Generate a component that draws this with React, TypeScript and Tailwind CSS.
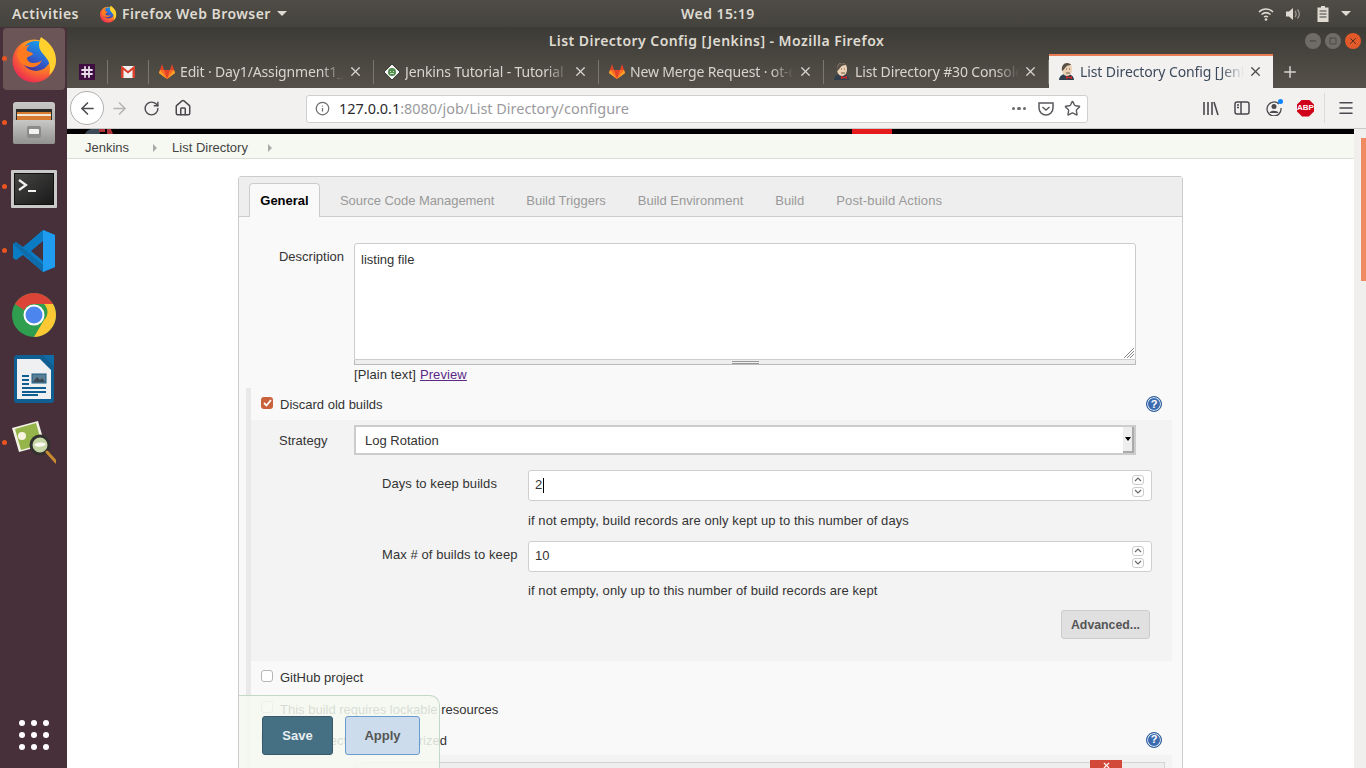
import { ArrowLeft, ArrowRight, Home, Info, Menu, Minus, Plus, RotateCw, Square, Star, X } from "lucide-react";

function FirefoxLogo({ size, id }: { size: number; id: string }) {
  return (
    <svg width={size} height={size} viewBox="0 0 48 48">
      <defs>
        <radialGradient id={`${id}a`} cx="0.7" cy="0.2" r="1">
          <stop offset="0" stopColor="#ffd23f" />
          <stop offset="0.45" stopColor="#ff8a1f" />
          <stop offset="0.8" stopColor="#f0384a" />
          <stop offset="1" stopColor="#d4187a" />
        </radialGradient>
        <linearGradient id={`${id}b`} x1="0.8" y1="0" x2="0.3" y2="1">
          <stop offset="0" stopColor="#12a6ee" />
          <stop offset="0.6" stopColor="#2f5fcf" />
          <stop offset="1" stopColor="#49308f" />
        </linearGradient>
      </defs>
      <circle cx="24" cy="26" r="21.5" fill={`url(#${id}a)`} />
      <circle cx="26" cy="21" r="15" fill={`url(#${id}b)`} />
      <path d="M7 19c2-5 7-9 13-9-3 2-4 4-3 6 2 1 5 1 6 3-1 2-5 2-6 4 0 3 3 5 7 5 3 0 6-1 8-3-2 5-7 8-12 7-7-1-12-6-13-13z" fill="#ff7a1f" />
      <path d="M31 2c6 4 15 11 15 23 0 7-3 12-7 15 2-6 1-12-2-16-3-5-8-8-8-14 0-3 1-6 2-8z" fill="#ffd02e" />
    </svg>
  );
}

function FilesIcon() {
  return (
    <svg width="42" height="42" viewBox="0 0 42 42">
      <defs>
        <linearGradient id="cabinet" x1="0" y1="0" x2="0" y2="1">
          <stop offset="0" stopColor="#c8c8c7" />
          <stop offset="1" stopColor="#929291" />
        </linearGradient>
      </defs>
      <rect x="0" y="0" width="42" height="42" rx="3" fill="url(#cabinet)" />
      <rect x="3" y="7" width="36" height="11" fill="#2d2b2a" />
      <rect x="4" y="10" width="34" height="8" fill="#d67a32" />
      <rect x="4" y="12" width="34" height="2" fill="#f2e6d5" />
      <rect x="0" y="18" width="42" height="24" rx="2" fill="url(#cabinet)" />
      <rect x="14" y="24" width="14" height="12" rx="2" fill="#8b8b8a" />
      <rect x="16" y="27" width="10" height="5" rx="1" fill="#f2f2f2" />
    </svg>
  );
}

function TerminalIcon() {
  return (
    <svg width="46" height="38" viewBox="0 0 46 38">
      <defs>
        <linearGradient id="termbg" x1="0" y1="0" x2="1" y2="1">
          <stop offset="0" stopColor="#454544" />
          <stop offset="1" stopColor="#1a1a1a" />
        </linearGradient>
      </defs>
      <rect width="46" height="38" rx="1" fill="#c9c9c7" />
      <rect x="3" y="3" width="40" height="32" fill="#111" />
      <rect x="4" y="4" width="38" height="30" fill="url(#termbg)" />
      <path d="M8 10l7 5-7 5" fill="none" stroke="#f2f2f2" strokeWidth="2.200" />
      <rect x="17" y="20" width="8" height="2" fill="#f2f2f2" />
    </svg>
  );
}

function VscodeIcon() {
  return (
    <svg width="42" height="42" viewBox="0 0 42 42">
      <path d="M30 0l12 5v32l-12 5-20-17-7 5-3-2V14l3-2 7 5z" fill="#0b7bc4" />
      <path d="M30 0l12 5v32l-12 5z" fill="#1f9cf0" />
      <path d="M30 11L18 21l12 10z" fill="#47303a" />
      <path d="M0 14l3-2 27 23v7z" fill="#0e6cab" />
    </svg>
  );
}

function ChromeIcon({ size }: { size: number }) {
  return (
    <svg width={size} height={size} viewBox="0 0 44 44">
      <circle cx="22" cy="22" r="22" fill="#2f9e4f" />
      <path d="M3 11a22 22 0 0 1 38 0H22a11 11 0 0 0-10 6z" fill="#db4437" />
      <path d="M41 11a22 22 0 0 1-19 33l10-17a11 11 0 0 0 0-16z" fill="#fcc934" />
      <circle cx="22" cy="22" r="10.500" fill="#fff" />
      <circle cx="22" cy="22" r="8.500" fill="#4c85ee" />
    </svg>
  );
}

function WriterIcon() {
  return (
    <svg width="40" height="48" viewBox="0 0 40 48">
      <path d="M2 0h26l12 12v33a3 3 0 0 1-3 3H3a3 3 0 0 1-3-3V2z" fill="#0f5f93" />
      <path d="M28 0h12v12z" fill="#0f6ba5" />
      <path d="M3 4h23l11 11v29H3z" fill="#eef0f1" />
      <rect x="18" y="19" width="14" height="9" fill="#5b7f95" stroke="#1b5c86" />
      <path d="M19 27l4-5 3 3 2-2 3 4z" fill="#3b4a52" />
      <path d="M8 21h7M8 25h7M8 29h7M8 33h24M8 37h24M8 40h16" stroke="#0f5f93" strokeWidth="2" />
    </svg>
  );
}

function ViewerIcon() {
  return (
    <svg width="44" height="44" viewBox="0 0 44 44">
      <path d="M0 7L26 0l7 24-26 7z" fill="#f3f2e6" />
      <path d="M3 8l21-6 6 21-21 6z" fill="#95b54a" />
      <circle cx="10" cy="15" r="4" fill="#f7f4e2" />
      <circle cx="28" cy="24" r="9" fill="#c7d6a5" stroke="#333130" strokeWidth="3" />
      <path d="M22 24c3-3 8-3 12-1-2 3-9 4-12 1z" fill="#fafaf2" />
      <path d="M35 31l9 10" stroke="#c78a30" strokeWidth="3" strokeLinecap="round" />
    </svg>
  );
}

function GitlabIcon() {
  return (
    <svg width="16" height="15" viewBox="0 0 16 15">
      <path d="M8 15L0 9l1-3h14l1 3z" fill="#fc6d26" />
      <path d="M8 15L5 6h6z" fill="#e24329" />
      <path d="M1 6l2-6 2 6zM15 6l-2-6-2 6z" fill="#e24329" />
      <path d="M1 6L0 9l8 6zM15 6l1 3-8 6z" fill="#fca326" />
    </svg>
  );
}

function JenkinsFavicon() {
  return (
    <svg width="16" height="17" viewBox="0 0 16 17">
      <path d="M0 17c0-3 2-5 5-6h5c3 1 5 3 5 6z" fill="#2f3d4c" />
      <path d="M3 6c0-4 2-6 5-6s5 2 5 6-2 7-5 7-5-3-5-7z" fill="#ecd0b4" />
      <path d="M3 8C2 3 5 0 8 0c2 0 4 1 4 2-3 0-5 1-6 3-1 1-1 2-3 3z" fill="#5a5148" />
      <path d="M7 6h1M10 6h1M7 10h4" stroke="#6b5a4a" strokeWidth="1" />
      <path d="M7 13l3 1 3-1v3l-3-1-3 1z" fill="#cc2b2b" />
    </svg>
  );
}

function JenkinsTutorialFavicon() {
  return (
    <svg width="16" height="16" viewBox="0 0 16 16">
      <path d="M8 0l8 8-8 8-8-8z" fill="#f4f4f4" stroke="#222" strokeWidth="0.800" />
      <circle cx="8" cy="8" r="4" fill="#4f8a4a" />
      <path d="M6 7.500h1M9 7.500h1M6 9.500h4" stroke="#eee" strokeWidth="0.800" />
    </svg>
  );
}

function SlackIcon() {
  return (
    <svg width="16" height="16" viewBox="0 0 16 16">
      <rect width="16" height="16" fill="#3f0e40" />
      <path d="M6 3v10M10 3v10M3 6h10M3 10h10" stroke="#e8dce8" strokeWidth="1.800" strokeLinecap="round" />
    </svg>
  );
}

function GmailIcon() {
  return (
    <svg width="14" height="12" viewBox="0 0 14 12">
      <rect width="14" height="12" fill="#f1f1f1" />
      <path d="M0 0v12h2.500V4L7 7.500 11.500 4v8H14V0h-1L7 5 1 0z" fill="#d9412f" />
    </svg>
  );
}

type TabInfo = { title: string; icon: React.ReactNode };

const tabs: TabInfo[] = [
  { title: "Edit · Day1/Assignment1_", icon: <GitlabIcon /> },
  { title: "Jenkins Tutorial - Tutorial", icon: <JenkinsTutorialFavicon /> },
  { title: "New Merge Request · ot-dev", icon: <GitlabIcon /> },
  { title: "List Directory #30 Console", icon: <JenkinsFavicon /> },
];

function BrowserTab({ tab }: { tab: TabInfo }) {
  return (
    <div className="flex h-full w-[224px] shrink-0 items-center pl-[10px]">
      <div className="flex w-[16px] shrink-0 justify-center">{tab.icon}</div>
      <span className="ml-[5px] w-[164px] overflow-hidden whitespace-nowrap text-[14px] tracking-[-0.15px] text-[#d8d5cf] [mask-image:linear-gradient(to_right,black_86%,transparent)]">
        {tab.title}
      </span>
      <X size={15} className="ml-[4px] shrink-0 text-[#d8d5cf]" />
    </div>
  );
}

function TabSeparator() {
  return <div className="h-[24px] w-px shrink-0 bg-[#7b7770]" />;
}

function DockSlot({ children, running }: { children: React.ReactNode; running?: boolean }) {
  return (
    <div className="relative flex h-[64px] w-full shrink-0 items-center justify-center">
      {running && <span className="absolute left-[2px] top-[29px] size-[5px] rounded-full bg-[#e95420]" />}
      {children}
    </div>
  );
}

function Dock() {
  return (
    <div className="flex h-full w-[67px] shrink-0 flex-col items-center bg-[#47303a]">
      <DockSlot running>
        <div className="flex size-[62px] items-center justify-center rounded-[4px] bg-[#6b5556]">
          <FirefoxLogo size={48} id="dockfox" />
        </div>
      </DockSlot>
      <DockSlot running><FilesIcon /></DockSlot>
      <DockSlot running><div className="mt-[3px]"><TerminalIcon /></div></DockSlot>
      <DockSlot running><VscodeIcon /></DockSlot>
      <DockSlot><ChromeIcon size={44} /></DockSlot>
      <DockSlot><WriterIcon /></DockSlot>
      <DockSlot running><ViewerIcon /></DockSlot>
      <div className="mb-[18px] mt-auto grid grid-cols-3 gap-[6px]">
        {Array.from({ length: 9 }).map((_, i) => (
          <span key={i} className="size-[6px] rounded-full bg-white" />
        ))}
      </div>
    </div>
  );
}

function TopPanel() {
  return (
    <div className="grid h-[27px] shrink-0 grid-cols-[681px_auto_1fr] items-center bg-gradient-to-b from-[#4f4c46] to-[#45433d] text-[14px] font-semibold tracking-[0.45px] text-[#dfdbd2]">
      <div className="flex items-center pl-[12px]">
        <span>Activities</span>
        <div className="ml-[20px]"><FirefoxLogo size={18} id="panelfox" /></div>
        <span className="ml-[5px]">Firefox Web Browser</span>
        <span className="ml-[6px] h-0 w-0 border-x-[5px] border-t-[5px] border-x-transparent border-t-[#dfdbd2]" />
      </div>
      <span>Wed 15:19</span>
      <div className="flex items-center justify-end pr-[15px]">
        <svg width="16" height="14" viewBox="0 0 16 14" fill="none" stroke="#dfdbd2" strokeWidth="1.500">
          <path d="M1 5c4-4 10-4 14 0M3.500 7.500c3-2.500 6-2.500 9 0M6 10c1.500-1 2.500-1 4 0" />
          <circle cx="8" cy="12.500" r="1.300" fill="#dfdbd2" stroke="none" />
        </svg>
        <svg className="ml-[12px]" width="16" height="14" viewBox="0 0 16 14">
          <path d="M0 4.500h3L7 1v12L3 9.500H0z" fill="#dfdbd2" />
          <path d="M9 4c1.500 2 1.500 4 0 6M11.500 2.500c2.500 3 2.500 6 0 9" stroke="#9a978f" strokeWidth="1.300" fill="none" />
        </svg>
        <svg className="ml-[15px]" width="12" height="16" viewBox="0 0 12 16">
          <path d="M4 0h4v1.500h3.500V16H.5V1.500H4z" fill="#dfdbd2" />
          <path d="M2.500 5h7M2.500 8h7M2.500 11h7" stroke="#45433d" strokeWidth="1.200" />
        </svg>
        <span className="ml-[12px] h-0 w-0 border-x-[5px] border-t-[5px] border-x-transparent border-t-[#dfdbd2]" />
      </div>
    </div>
  );
}

function WindowButtons() {
  return (
    <div className="flex items-center justify-end gap-[4px] pr-[5px]">
      <span className="flex size-[16px] items-center justify-center rounded-full bg-[#6f6c66]">
        <Minus size={10} strokeWidth={2} className="text-[#3a3935]" />
      </span>
      <span className="flex size-[16px] items-center justify-center rounded-full bg-[#6f6c66]">
        <Square size={8} strokeWidth={2} className="text-[#3a3935]" />
      </span>
      <span className="flex size-[16px] items-center justify-center rounded-full bg-[#e2592a]">
        <X size={10} strokeWidth={2} className="text-[#3a2a22]" />
      </span>
    </div>
  );
}

function TabStrip() {
  return (
    <div className="flex h-[34px] shrink-0 items-end pl-[8px]">
      <div className="flex h-[33px] w-[32px] shrink-0 items-center pl-[4px]"><SlackIcon /></div>
      <div className="flex h-[33px] items-center"><TabSeparator /></div>
      <div className="flex h-[33px] w-[40px] shrink-0 items-center pl-[13px]"><GmailIcon /></div>
      <div className="flex h-[33px] items-center"><TabSeparator /></div>
      {tabs.map((tab) => (
        <div key={tab.title} className="flex h-[33px] items-center">
          <BrowserTab tab={tab} />
          <TabSeparator />
        </div>
      ))}
      <div className="flex h-[34px] w-[224px] shrink-0 items-center border-t-[2px] border-[#e97d56] bg-[#f2f1f0] pb-[2px] pl-[10px]">
        <JenkinsFavicon />
        <span className="ml-[5px] w-[164px] overflow-hidden whitespace-nowrap text-[14px] tracking-[-0.1px] text-[#3d4a5c] [mask-image:linear-gradient(to_right,black_86%,transparent)]">
          List Directory Config [Jenkins]
        </span>
        <X size={15} className="ml-[4px] text-[#4a4a48]" />
      </div>
      <div className="flex h-[33px] items-center pl-[8px]">
        <Plus size={18} className="text-[#d8d5cf]" />
      </div>
    </div>
  );
}

function Toolbar() {
  return (
    <div className="flex h-[41px] shrink-0 items-center border-b border-[#c9c9c8] bg-[#f2f1f0] pl-[3px] text-[#4a4a4f]">
      <span className="flex size-[34px] items-center justify-center rounded-full border border-[#b1b1b0] bg-white">
        <ArrowLeft size={19} />
      </span>
      <ArrowRight size={19} className="ml-[6px] text-[#b5b5b4]" />
      <RotateCw size={17} className="ml-[14px]" />
      <Home size={18} className="ml-[14px]" />
      <div className="ml-[114px] mt-px flex h-[28px] w-[782px] items-center rounded-[3px] border border-[#cfcfce] bg-white pl-[8px] pr-[6px]">
        <Info size={15} className="text-[#6a6a6f]" />
        <span className="ml-[9px] whitespace-nowrap text-[14.450px] text-[#9a9a9e]">
          <span className="text-[#2a2a2e]">127.0.0.1</span>:8080/job/List Directory/configure
        </span>
        <div className="ml-auto flex items-center">
          <span className="flex gap-[2px]">
            <span className="size-[3.500px] rounded-full bg-[#6a6a6f]" />
            <span className="size-[3.500px] rounded-full bg-[#6a6a6f]" />
            <span className="size-[3.500px] rounded-full bg-[#6a6a6f]" />
          </span>
          <svg className="ml-[12px]" width="16" height="14" viewBox="0 0 16 14" fill="none" stroke="#5a5a5f" strokeWidth="1.500">
            <path d="M1 1h14v5a7 7 0 0 1-14 0z" />
            <path d="M4.500 5L8 8l3.500-3" />
          </svg>
          <Star size={17} className="ml-[10px] text-[#5a5a5f]" />
        </div>
      </div>
      <svg className="ml-[115px]" width="16" height="15" viewBox="0 0 16 15" fill="none" stroke="#4a4a4f" strokeWidth="1.600">
        <path d="M1 1v13M5 1v13M9 1v13M11 1l4 13" />
      </svg>
      <svg className="ml-[15px]" width="16" height="14" viewBox="0 0 16 14" fill="none" stroke="#4a4a4f" strokeWidth="1.500">
        <rect x="1" y="1" width="14" height="12" rx="2" />
        <path d="M7 1v12M3 4h2M3 6.500h2" />
      </svg>
      <div className="relative ml-[16px] size-[16px]">
        <svg width="16" height="16" viewBox="0 0 16 16" fill="none" stroke="#4a4a4f" strokeWidth="1.300">
          <path d="M13 4a7 7 0 1 0 2 4" />
          <circle cx="8" cy="6.500" r="2.500" fill="#4a4a4f" stroke="none" />
          <path d="M3.500 13c1-3 8-3 9 0" fill="#4a4a4f" stroke="none" />
        </svg>
        <span className="absolute -right-[1px] -top-[1px] size-[5px] rounded-full bg-[#0a84ff]" />
      </div>
      <span className="ml-[15px] flex size-[17px] items-center justify-center bg-[#d0021b] font-['Liberation_Sans',sans-serif] text-[8px] font-bold leading-none text-white [clip-path:polygon(30%_0,70%_0,100%_30%,100%_70%,70%_100%,30%_100%,0_70%,0_30%)]">
        ABP
      </span>
      <div className="ml-[10px] h-[30px] w-px bg-[#dcdcdb]" />
      <Menu size={18} className="ml-[12px]" />
    </div>
  );
}

function HelpIcon() {
  return (
    <span className="flex size-[16px] items-center justify-center rounded-full border border-[#2f5f9e] bg-[#3d6bb0] text-[11px] font-bold leading-none text-white shadow-[inset_0_0_0_1px_#dbe6f3]">
      ?
    </span>
  );
}

function CheckBox({ checked }: { checked?: boolean }) {
  if (checked) {
    return (
      <span className="flex size-[12px] shrink-0 items-center justify-center rounded-[3px] bg-[#c9623c]">
        <svg width="9" height="8" viewBox="0 0 9 8" fill="none" stroke="#fff" strokeWidth="1.800">
          <path d="M1 4l2.500 2.500L8 1" />
        </svg>
      </span>
    );
  }
  return <span className="block size-[12px] shrink-0 rounded-[3px] border border-[#b5b5b5] bg-white" />;
}

function OptionRow({ label, checked, help, height }: { label: string; checked?: boolean; help?: boolean; height: string }) {
  return (
    <div className={`flex items-center pl-[10px] pr-[10px] ${height}`}>
      <span className="-mt-[3px]"><CheckBox checked={checked} /></span>
      <span className="ml-[7px] mt-[2px] text-[13px] text-[#333]">{label}</span>
      {help && <span className="ml-auto"><HelpIcon /></span>}
    </div>
  );
}

function Spinner() {
  return (
    <div className="flex flex-col gap-[2px]">
      <span className="flex h-[10px] w-[12px] items-center justify-center rounded-[3px] border border-[#ccc] bg-white">
        <svg width="8" height="5" viewBox="0 0 8 5" fill="none" stroke="#666" strokeWidth="1.200"><path d="M1 4l3-3 3 3" /></svg>
      </span>
      <span className="flex h-[10px] w-[12px] items-center justify-center rounded-[3px] border border-[#ccc] bg-white">
        <svg width="8" height="5" viewBox="0 0 8 5" fill="none" stroke="#666" strokeWidth="1.200"><path d="M1 1l3 3 3-3" /></svg>
      </span>
    </div>
  );
}

function NumberField({ label, value, caret }: { label: string; value: string; caret?: boolean }) {
  return (
    <div className="flex items-start pl-[131px]">
      <span className="w-[146px] pt-[4px] text-[13px] tracking-[0.08px] text-[#333]">{label}</span>
      <div className="flex h-[31px] w-[624px] items-center rounded-[3px] border border-[#cfcfcf] bg-white pl-[6px] pr-[7px] text-[13px] text-[#333]">
        <span className="-mt-[2px]">{value}</span>
        {caret && <span className="ml-px h-[15px] w-px bg-black" />}
        <span className="ml-auto"><Spinner /></span>
      </div>
    </div>
  );
}

function HintRow({ children, height }: { children: React.ReactNode; height: string }) {
  return <div className={`flex items-center pl-[277px] text-[13px] tracking-[0.08px] text-[#333] ${height}`}>{children}</div>;
}

function ConfigTabs() {
  return (
    <div className="flex h-[40px] items-end border-b border-[#ccc] bg-[#eee] pl-[10px] text-[13px] text-[#999]">
      <div className="relative -mb-px flex h-[34px] w-[71px] items-center justify-center rounded-t-[4px] border border-b-0 border-[#ccc] bg-[#f9f9f9] font-bold text-black">
        General
      </div>
      <div className="ml-[20px] flex h-[33px] items-center gap-[32px] whitespace-nowrap pt-[3px]">
        <span className="tracking-[-0.05px]">Source Code Management</span>
        <span>Build Triggers</span>
        <span>Build Environment</span>
        <span>Build</span>
        <span className="tracking-[0.15px]">Post-build Actions</span>
      </div>
    </div>
  );
}

function DescriptionField() {
  return (
    <>
      <div className="mt-[26px] flex items-start">
        <span className="w-[105px] pt-[4px] text-right text-[13px] text-[#333]">Description</span>
        <div className="relative ml-[10px] h-[117px] w-[782px] rounded-t-[3px] border border-[#ccc] bg-white px-[6px] py-[6px] text-[13px] text-[#333]">
          listing file
          <svg className="absolute bottom-px right-px" width="11" height="11" viewBox="0 0 11 11" stroke="#888" strokeWidth="1">
            <path d="M1 11L11 1M4 11l7-7M7 11l4-4" />
          </svg>
        </div>
      </div>
      <div className="ml-[115px] flex h-[5px] w-[782px] items-center justify-center border border-t-0 border-[#bbb] bg-[#eee]">
        <span className="h-[3px] w-[27px] border-y border-[#999]" />
      </div>
      <div className="ml-[115px] mt-px flex h-[17px] items-center text-[13px] tracking-[0.1px] text-[#333]">
        [Plain text]<span className="ml-[4px] text-[#5b2a86] underline">Preview</span>
      </div>
    </>
  );
}

function DiscardPanel() {
  return (
    <div className="flex h-[241px] flex-col bg-[#f3f3f3] pt-[5px]">
      <div className="flex items-start pl-[28px]">
        <span className="w-[75px] pt-[6px] text-[13px] text-[#333]">Strategy</span>
        <div className="flex h-[30px] w-[782px] items-stretch border-2 border-[#ccc] bg-white text-[13px] text-[#333]">
          <span className="flex flex-1 items-center pl-[9px] pt-[1px]">Log Rotation</span>
          <span className="flex w-[11px] items-center justify-center border-b-2 border-r-2 border-[#aaa] bg-[#eee]">
            <span className="h-0 w-0 border-x-[3px] border-t-[4px] border-x-transparent border-t-black" />
          </span>
        </div>
      </div>
      <div className="mt-[15px]"><NumberField label="Days to keep builds" value="2" caret /></div>
      <HintRow height="h-[40px]">if not empty, build records are only kept up to this number of days</HintRow>
      <NumberField label="Max # of builds to keep" value="10" />
      <HintRow height="h-[38px]">if not empty, only up to this number of build records are kept</HintRow>
      <div className="flex justify-end pr-[22px]">
        <span className="flex h-[29px] w-[89px] items-center justify-center rounded-[3px] border border-[#ccc] bg-[#e0e0e0] pt-[2px] text-[12.300px] font-bold text-[#555]">
          Advanced...
        </span>
      </div>
    </div>
  );
}

function ParameterPanel() {
  return (
    <div className="h-[300px] bg-[#f3f3f3] pl-[103px] pt-[7px]">
      <div className="flex h-full">
        <div className="w-[5px] bg-[#e6e6e6]" />
        <div className="relative ml-[2px] w-[804px] border border-[#d4d4d4] bg-[#eee]">
          <span className="absolute -top-[3px] right-[42px] flex h-[40px] w-[32px] justify-center bg-[#d24939] pt-[1px]">
            <X size={9} strokeWidth={3} className="text-white" />
          </span>
        </div>
      </div>
    </div>
  );
}

function SaveBar() {
  return (
    <div className="absolute bottom-0 left-[172px] flex h-[73px] w-[201px] items-start rounded-tr-[10px] border-r border-t border-[#c3d8c6] bg-[#f5f9f0]/85 pl-[23px] pt-[20px] text-[13px] font-bold">
      <span className="flex h-[39px] w-[71px] items-center justify-center rounded-[3px] border border-[#375a6b] bg-[#457084] text-[#e8eef0]">
        Save
      </span>
      <span className="ml-[12px] flex h-[39px] w-[75px] items-center justify-center rounded-[3px] border border-[#6a9bd0] bg-[#cddcec] text-[#555]">
        Apply
      </span>
    </div>
  );
}

function JenkinsPage() {
  return (
    <div className="relative min-w-0 flex-1 overflow-hidden bg-white font-['Liberation_Sans',Arial,sans-serif]">
      <div className="flex h-[5px] items-start bg-black pl-[18px]">
        <svg width="33" height="5" viewBox="0 0 33 5">
          <path d="M0 5c1-3 4-5 8-5h6l1 5z" fill="#3c4a57" />
          <path d="M14 0h6v3h-6zM22 0h4l2 5h-6z" fill="#b0343a" />
        </svg>
        <span className="ml-[734px] h-full w-[40px] bg-[#e51a1a]" />
      </div>
      <div className="flex h-[25px] items-center border-b border-[#dcdfd8] bg-[#f6f8f2] pl-[18px] pt-[4px] text-[13px] text-[#444]">
        <span>Jenkins</span>
        <span className="ml-[24px] h-0 w-0 border-y-[4px] border-l-[4px] border-y-transparent border-l-[#aaa]" />
        <span className="ml-[15px]">List Directory</span>
        <span className="ml-[20px] h-0 w-0 border-y-[4px] border-l-[4px] border-y-transparent border-l-[#aaa]" />
      </div>
      <div className="ml-[171px] mt-[17px] w-[945px] rounded-t-[3px] border border-[#ccc] bg-[#f9f9f9]">
        <ConfigTabs />
        <DescriptionField />
        <div className="ml-[7px] mt-[5px] w-[926px] border-l-[5px] border-[#e9e9e9]">
          <OptionRow label="Discard old builds" checked help height="h-[32px]" />
          <DiscardPanel />
          <OptionRow label="GitHub project" height="h-[32px]" />
          <OptionRow label="This build requires lockable resources" height="h-[31px]" />
          <OptionRow label="This project is parameterized" help height="h-[31px]" />
          <ParameterPanel />
        </div>
      </div>
      <SaveBar />
    </div>
  );
}

function Scrollbar() {
  return (
    <div className="flex w-[12px] shrink-0 justify-end bg-[#f0efed] pt-[9px]">
      <div className="h-[143px] w-[5px] bg-[#f08a63]" />
    </div>
  );
}

export default function App() {
  return (
    <div className="flex h-screen w-screen flex-col overflow-hidden bg-[#45433d] font-['Noto_Sans',sans-serif]">
      <TopPanel />
      <div className="flex min-h-0 flex-1">
        <Dock />
        <div className="flex min-w-0 flex-1 flex-col">
          <div className="bg-gradient-to-b from-[#3d3b36] to-[#55514a]">
            <div className="grid h-[27px] grid-cols-[1fr_auto_1fr] items-center">
              <div />
              <span className="text-[14px] font-semibold tracking-[0.45px] text-[#dfdbd2]">List Directory Config [Jenkins] - Mozilla Firefox</span>
              <WindowButtons />
            </div>
            <TabStrip />
          </div>
          <Toolbar />
          <div className="flex min-h-0 flex-1">
            <JenkinsPage />
            <Scrollbar />
          </div>
        </div>
      </div>
    </div>
  );
}
